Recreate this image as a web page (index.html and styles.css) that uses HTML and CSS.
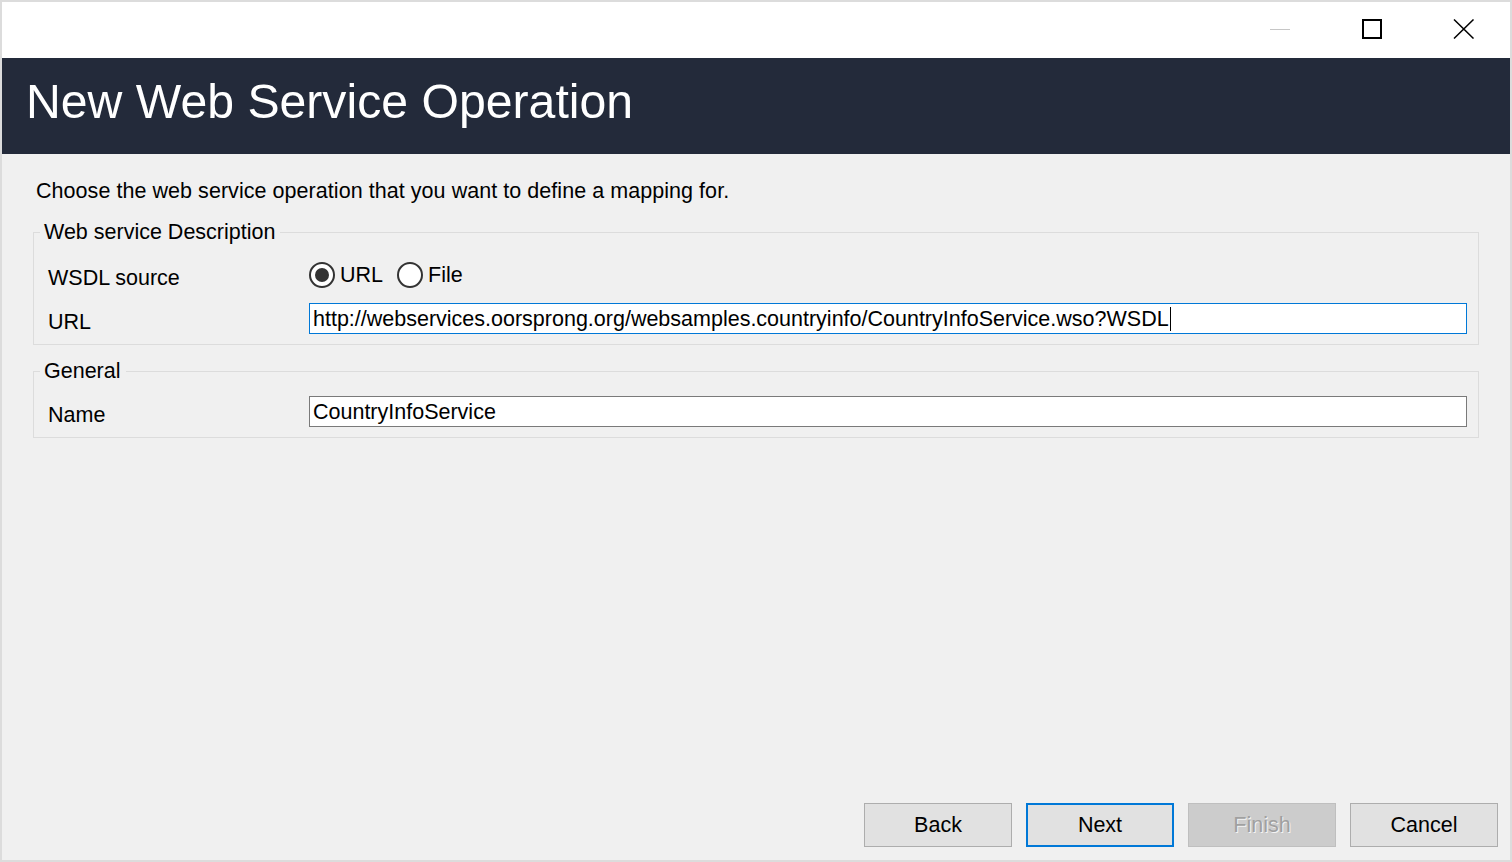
FILE: index.html
```html
<!DOCTYPE html>
<html>
<head>
<meta charset="utf-8">
<title>New Web Service Operation</title>
<link rel="stylesheet" href="styles.css">
</head>
<body>
<div class="window">
  <div class="titlebar">
    <div class="ctl">
      <svg width="20" height="20" viewBox="0 0 20 20"><line x1="0" y1="10.5" x2="20" y2="10.5" stroke="#c6c6c6" stroke-width="1"/></svg>
    </div>
    <div class="ctl">
      <svg width="20" height="20" viewBox="0 0 20 20"><rect x="1" y="1" width="18" height="18" fill="none" stroke="#000" stroke-width="2"/></svg>
    </div>
    <div class="ctl">
      <svg width="22" height="20" viewBox="0 0 22 20"><path d="M1 0.5 L20.5 19.5 M20.5 0.5 L1 19.5" fill="none" stroke="#000" stroke-width="1.5"/></svg>
    </div>
  </div>
  <div class="header">
    <h1 class="title">New Web Service Operation</h1>
  </div>
  <div class="content">
    <div class="main">
      <p class="intro">Choose the web service operation that you want to define a mapping for.</p>
      <fieldset class="group">
        <legend class="legend">Web service Description</legend>
        <div class="grid grid-two">
          <div class="label">WSDL source</div>
          <div class="radios">
            <span class="radio"><span class="circle checked"><span class="dot"></span></span><span class="rtext">URL</span></span>
            <span class="radio"><span class="circle"></span><span class="rtext">File</span></span>
          </div>
          <div class="label">URL</div>
          <div class="field focused">http://webservices.oorsprong.org/websamples.countryinfo/CountryInfoService.wso?WSDL<span class="caret"></span></div>
        </div>
      </fieldset>
      <fieldset class="group group-general">
        <legend class="legend">General</legend>
        <div class="grid grid-one">
          <div class="label">Name</div>
          <div class="field">CountryInfoService</div>
        </div>
      </fieldset>
    </div>
    <div class="footer">
      <div class="btn">Back</div>
      <div class="btn btn-default">Next</div>
      <div class="btn btn-disabled">Finish</div>
      <div class="btn">Cancel</div>
    </div>
  </div>
</div>
</body>
</html>
```

FILE: styles.css
```css
* { box-sizing: border-box; }
html, body { margin: 0; padding: 0; }
body {
  font-family: "Liberation Sans", Arial, sans-serif;
  font-size: 21.5px;
  color: #000;
  background: #fff;
}
.window {
  width: 1512px;
  height: 862px;
  border: 2px solid #dcdcdc;
  display: flex;
  flex-direction: column;
  background: #f0f0f0;
  overflow: hidden;
}
.titlebar {
  height: 56px;
  flex: none;
  background: #fff;
  display: flex;
  justify-content: flex-end;
}
.ctl {
  width: 92px;
  height: 56px;
  display: flex;
  justify-content: center;
  align-items: flex-start;
  padding-top: 17px;
}
.ctl svg { display: block; }
.header {
  height: 96px;
  flex: none;
  background: #232a3a;
  padding: 19px 0 0 24px;
}
.title {
  margin: 0;
  font-weight: normal;
  font-size: 48.2px;
  line-height: 48px;
  color: #fff;
}
.content {
  flex: 1;
  display: flex;
  flex-direction: column;
  justify-content: space-between;
}
.main {
  padding: 25px 31px 0 31px;
}
.intro {
  margin: 0 0 17px 3px;
  line-height: 24px;
  letter-spacing: 0.05px;
}
.group {
  margin: 0;
  border: 1px solid #dcdcdc;
  padding: 16px 11px 10px 14px;
  min-width: 0;
}
.group-general {
  margin-top: 14px;
  padding-top: 13px;
}
.legend {
  padding: 0 5px 0 4px;
  margin-left: -8px;
  line-height: 24px;
}
.grid {
  display: grid;
  grid-template-columns: 261px 1fr;
  row-gap: 13px;
  align-items: center;
}
.grid-two { grid-template-rows: 30px 31px; }
.grid-one { grid-template-rows: 31px; }
.label {
  line-height: 24px;
  padding-top: 6px;
}
.radios {
  display: flex;
  align-items: center;
  height: 30px;
  gap: 14px;
}
.radio {
  display: flex;
  align-items: center;
  gap: 5px;
}
.circle {
  width: 26px;
  height: 26px;
  border: 2px solid #333;
  border-radius: 50%;
  background: #fff;
  display: flex;
  align-items: center;
  justify-content: center;
}
.dot {
  width: 14px;
  height: 14px;
  border-radius: 50%;
  background: #333;
}
.rtext { line-height: 24px; }
.field {
  height: 31px;
  border: 1px solid #7a7a7a;
  background: #fff;
  padding-left: 3px;
  display: flex;
  align-items: center;
  white-space: nowrap;
  overflow: hidden;
  line-height: 24px;
}
.field.focused { border-color: #0078d7; }
.caret {
  display: inline-block;
  width: 1px;
  height: 24px;
  background: #000;
  margin-left: 1px;
}
.footer {
  display: flex;
  justify-content: flex-end;
  gap: 14px;
  padding: 0 12px 13px 0;
}
.btn {
  width: 148px;
  height: 44px;
  border: 1px solid #adadad;
  background: #e1e1e1;
  display: flex;
  align-items: center;
  justify-content: center;
  line-height: 24px;
}
.btn-default { border: 2px solid #0078d7; }
.btn-disabled {
  background: #cccccc;
  border-color: #bfbfbf;
  color: #a0a0a0;
  text-shadow: 1px 1px 0 #f4f4f4;
}
```
